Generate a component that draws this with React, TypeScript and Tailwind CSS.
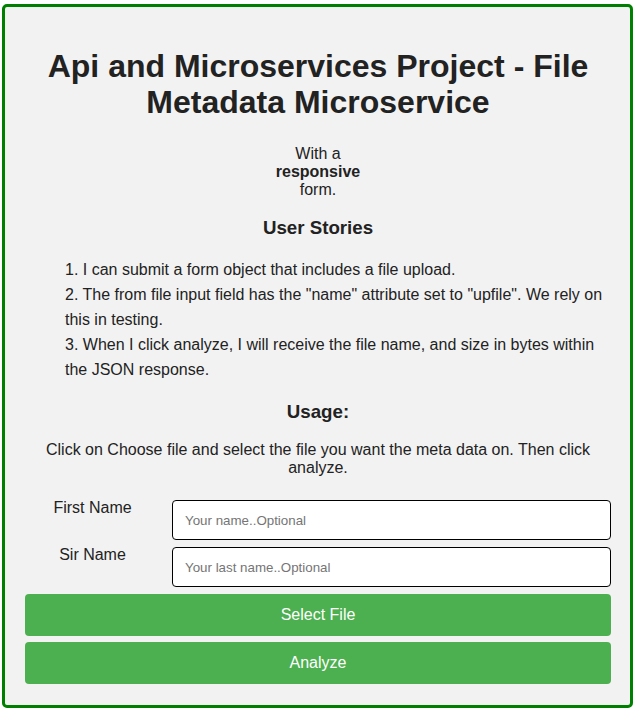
export default function App() {
  const stories = [
    "1. I can submit a form object that includes a file upload.",
    '2. The from file input field has the "name" attribute set to "upfile". We rely on this in testing.',
    "3. When I click analyze, I will receive the file name, and size in bytes within the JSON response.",
  ];

  return (
    <div className="min-h-[709px] bg-white pl-[2px] pt-[4px] font-['Liberation_Sans',Arial,sans-serif] text-[#222]">
      <div className="w-[631px] rounded-[5px] border-[3px] border-[#008000] bg-[#f2f2f2] pb-[21px] pl-[20px] pr-[19px] pt-[20px]">
        <h1 className="mb-[25px] mt-[21px] text-center text-[32px] font-bold leading-[36px]">
          Api and Microservices Project - File Metadata Microservice
        </h1>

        <p className="text-center text-[16px] leading-[18px]">
          <span className="block">With a</span>
          <b className="block">responsive</b>
          <span className="block">form.</span>
        </p>

        <h3 className="my-[18px] text-center text-[18.72px] font-bold leading-[21.5px]">User Stories</h3>

        <ul className="pl-[40px] text-[16px] leading-[25px]">
          {stories.map((story) => (
            <li key={story}>{story}</li>
          ))}
        </ul>

        <h3 className="my-[19px] text-center text-[18.72px] font-bold leading-[21.5px]">Usage:</h3>

        <p className="text-center text-[16px] leading-[18px]">
          Click on Choose file and select the file you want the meta data on. Then click analyze.
        </p>

        <form className="mt-[22px] flex flex-col">
          <div className="flex items-start">
            <label htmlFor="fname" className="w-[147px] pr-[12px] text-center text-[16px] leading-[18px]">
              First Name
            </label>
            <input
              id="fname"
              type="text"
              placeholder="Your name..Optional"
              className="mt-[1px] h-[40px] flex-1 rounded-[4px] border border-black bg-white px-[12px] text-[13.33px] text-[#222] outline-none placeholder:text-[#757575]"
            />
          </div>
          <div className="mt-[6px] flex items-start">
            <label htmlFor="lname" className="w-[147px] pr-[12px] text-center text-[16px] leading-[18px]">
              Sir Name
            </label>
            <input
              id="lname"
              type="text"
              placeholder="Your last name..Optional"
              className="mt-[1px] h-[40px] flex-1 rounded-[4px] border border-black bg-white px-[12px] text-[13.33px] text-[#222] outline-none placeholder:text-[#757575]"
            />
          </div>
          <button
            type="button"
            className="mt-[7px] h-[42px] w-full rounded-[4px] bg-[#4caf50] text-[16px] text-white"
          >
            Select File
          </button>
          <button
            type="button"
            className="mt-[6px] h-[42px] w-full rounded-[4px] bg-[#4caf50] text-[16px] text-white"
          >
            Analyze
          </button>
        </form>
      </div>
    </div>
  );
}
